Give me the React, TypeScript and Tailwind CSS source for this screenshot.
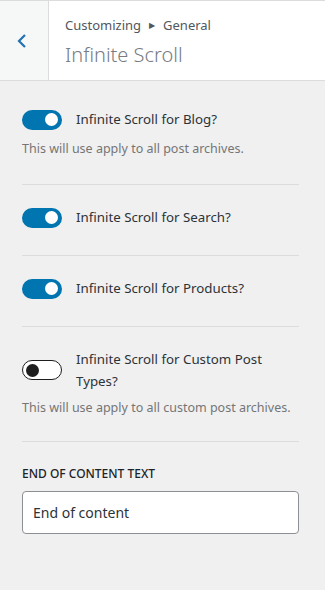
import React from "react";

function Toggle({ on }: { on: boolean }) {
  return on ? (
    <div className="w-[40px] h-[20px] rounded-full bg-[#0075af] flex items-center justify-end pr-[4px] shrink-0">
      <div className="w-[13px] h-[13px] rounded-full bg-white" />
    </div>
  ) : (
    <div className="w-[40px] h-[20px] rounded-full bg-white border-[1.5px] border-[#1e1e1e] flex items-center pl-[3px] shrink-0">
      <div className="w-[13px] h-[13px] rounded-full bg-[#1e1e1e]" />
    </div>
  );
}

function Row({ on, label, desc, descGap }: { on: boolean; label: React.ReactNode; desc?: string; descGap?: string }) {
  return (
    <div className="flex flex-col">
      <div className="flex items-center gap-[14px]">
        <Toggle on={on} />
        <div className="text-[13.3px] leading-[23px] text-[#2c3338]">{label}</div>
      </div>
      {desc && <div className={`${descGap ?? "mt-[9px]"} text-[12.5px] leading-[18px] text-[#757575]`}>{desc}</div>}
    </div>
  );
}

export default function App() {
  return (
    <div className="w-[325px] h-[590px] bg-[#f0f0f1] flex flex-col" style={{ fontFamily: '"Noto Sans", sans-serif' }}>
      <div className="h-[81px] bg-white border-t border-b border-[#dcdcde] flex shrink-0">
        <div className="w-[49px] bg-[#f6f7f7] border-r border-[#dcdcde] flex items-center justify-center pr-[4px]">
          <svg width="12" height="16" viewBox="0 0 12 16" fill="none">
            <path d="M9 2 L3 8 L9 14" stroke="#2271b1" strokeWidth="2.2" />
          </svg>
        </div>
        <div className="flex flex-col pl-[16px] pt-[14px]">
          <div className="text-[13px] leading-[20px] text-[#50575e] flex items-center">
            Customizing<span className="text-[8px] mx-[8px] text-[#50575e]">▶</span>General
          </div>
          <div className="text-[20px] leading-[30px] font-light text-[#787c82] mt-[5px]">Infinite Scroll</div>
        </div>
      </div>
      <div className="pl-[22px] pr-[26px] flex flex-col">
        <div className="pt-[27px] pb-[26px] border-b border-[#dcdcde]">
          <Row on label="Infinite Scroll for Blog?" desc="This will use apply to all post archives." />
        </div>
        <div className="pt-[21px] pb-[26px] border-b border-[#dcdcde]">
          <Row on label="Infinite Scroll for Search?" />
        </div>
        <div className="pt-[21px] pb-[26px] border-b border-[#dcdcde]">
          <Row on label="Infinite Scroll for Products?" />
        </div>
        <div className="pt-[21px] pb-[24px] border-b border-[#dcdcde]">
          <Row
            on={false}
            label={
              <div className="leading-[22px]">
                Infinite Scroll for Custom Post
                <br />
                Types?
              </div>
            }
            desc="This will use apply to all custom post archives."
            descGap="mt-[7px]"
          />
        </div>
        <div className="pt-[23px]">
          <div className="text-[12px] leading-[18px] font-medium text-[#1d2327] uppercase">End of content text</div>
          <div className="mt-[8px] h-[43px] bg-white border border-[#8c8f94] rounded-[4px] flex items-center px-[10px] text-[14px] text-[#2c3338]">
            End of content
          </div>
        </div>
      </div>
    </div>
  );
}
